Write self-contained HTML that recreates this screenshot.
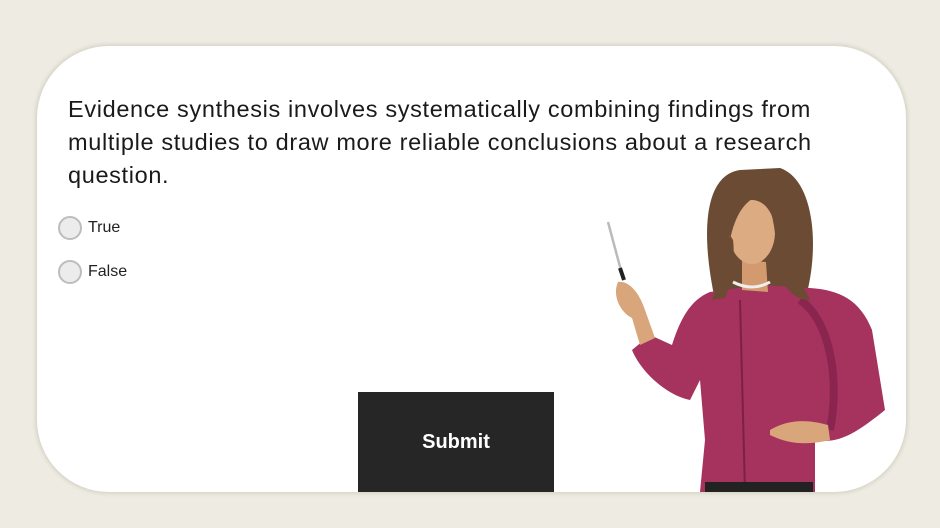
<!DOCTYPE html>
<html><head><meta charset="utf-8"><style>
html,body{margin:0;padding:0;}
body{width:940px;height:528px;background:#edebe2;position:relative;overflow:hidden;font-family:"Liberation Sans",sans-serif;}
.card{position:absolute;left:37px;top:46px;width:869px;height:446px;background:#fff;border-radius:72px;box-shadow:0 0 3px 2px #d9d6c8;overflow:hidden;}
.q{position:absolute;left:68px;top:93px;width:800px;font-size:23.5px;line-height:33px;color:#1a1a1a;letter-spacing:0.65px;}
.opt{position:absolute;left:58px;font-size:16px;color:#222;}
.opt span{display:inline-block;width:20px;height:20px;border:2px solid #bdbdbd;border-radius:50%;background:#ececec;vertical-align:middle;margin-right:6px;}
.btn{position:absolute;left:358px;top:392px;width:196px;height:100px;background:#262626;color:#fff;font-weight:bold;font-size:20px;text-align:center;line-height:100px;}
svg{position:absolute;left:0;top:0;}
</style></head><body>
<div class="card"></div>
<div class="q">Evidence synthesis involves systematically combining findings from multiple studies to draw more reliable conclusions about a research question.</div>
<div class="opt" style="top:216px"><span></span>True</div>
<div class="opt" style="top:260px"><span></span>False</div>
<svg width="940" height="528" viewBox="0 0 940 528">
<line x1="608" y1="222" x2="623" y2="278" stroke="#bbb" stroke-width="2.5"/>
<line x1="620" y1="268" x2="624" y2="280" stroke="#222" stroke-width="4"/>
<path d="M740 170 C705 175 700 230 715 300 L760 300 L805 300 C820 250 815 180 780 168 Z" fill="#6b4b34"/>
<path d="M710 292 C690 300 680 320 672 345 L650 335 L632 350 C640 370 665 395 690 400 L700 380 L705 440 L700 492 L815 492 L815 440 C840 445 860 430 885 410 L872 330 C860 300 840 290 810 288 L760 285 Z" fill="#a6325e"/>
<path d="M740 300 L745 492" stroke="#7e1f45" stroke-width="2"/>
<path d="M800 300 C830 320 840 380 830 430" stroke="#8a2550" stroke-width="8" fill="none"/>
<path d="M618 282 C612 295 620 312 632 318 L640 345 L655 338 L645 310 C640 295 630 280 618 282 Z" fill="#d9a57a"/>
<path d="M770 430 C790 418 810 420 828 425 L830 440 C810 445 790 445 770 435 Z" fill="#d9a57a"/>
<path d="M742 260 L742 290 L768 292 L766 262 Z" fill="#d29a6e"/>
<ellipse cx="752" cy="232" rx="23" ry="32" fill="#dcab82"/>
<path d="M733 282 Q752 292 770 282" stroke="#eee" stroke-width="3" fill="none"/>
<path d="M728 230 C722 190 745 170 770 180 C790 195 790 240 800 280 L810 300 C795 300 785 290 778 270 C776 230 772 200 760 195 C745 200 735 215 730 240 Z" fill="#6b4b34"/>
<path d="M730 235 C725 260 718 285 712 300 L725 298 C733 280 735 255 733 240 Z" fill="#6b4b34"/>
<rect x="705" y="482" width="108" height="10" fill="#222"/>
</svg>
<div class="btn">Submit</div>
</body></html>
